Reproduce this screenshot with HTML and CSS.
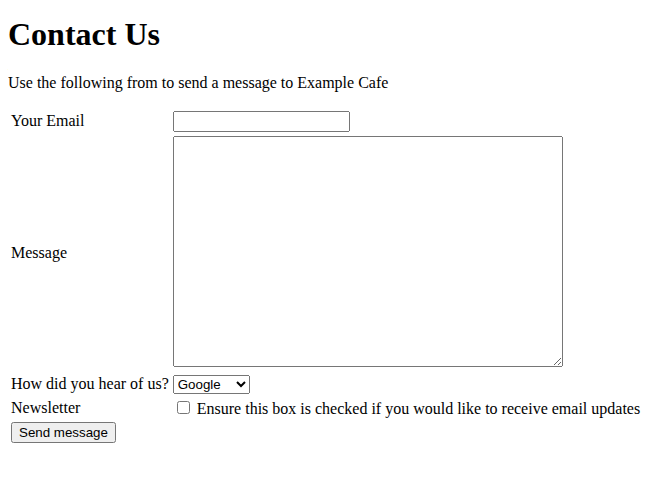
FILE: index.html
```html
<!DOCTYPE html>
<html>
<head>
<meta charset="utf-8">
<title>Contact Us</title>
<link rel="stylesheet" href="styles.css">
</head>
<body>
<h1 class="title">Contact Us</h1>
<p>Use the following from to send a message to Example Cafe</p>
<form>
<table>
<tr><td>Your Email</td><td><input type="text" class="email"></td></tr>
<tr><td>Message</td><td><textarea class="message"></textarea></td></tr>
<tr><td>How did you hear of us?</td><td><select class="source"><option>Google</option><option>Friend</option></select></td></tr>
<tr><td>Newsletter</td><td><input type="checkbox"> Ensure this box is checked if you would like to receive email updates</td></tr>
<tr><td colspan="2"><button type="button">Send message</button></td></tr>
</table>
</form>
</body>
</html>
```
FILE: styles.css
```css
body {
  font-family: "Liberation Serif", serif;
  font-size: 16px;
}
.title {
  margin-top: 7.5px;
}
input, select, textarea, button {
  font-family: "Liberation Sans", Arial, sans-serif;
  font-size: 13.333px;
}
.email {
  width: 177px;
  box-sizing: border-box;
}
.message {
  width: 390px;
  height: 231px;
  box-sizing: border-box;
}
.source {
  width: 77px;
}
```
